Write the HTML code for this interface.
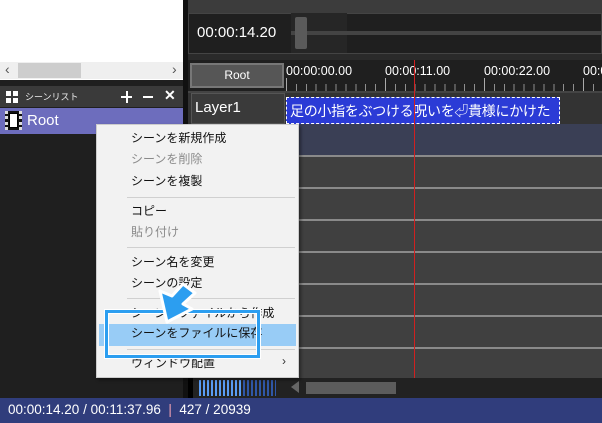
<!DOCTYPE html>
<html><head><meta charset="utf-8"><style>
*{margin:0;padding:0;box-sizing:border-box}
body{width:602px;height:423px;background:#1f1f1f;position:relative;overflow:hidden;font-family:"Liberation Sans","Noto Sans CJK JP",sans-serif}
.a{position:absolute}
.mi{position:absolute;left:131px;font-size:12px;color:#111;line-height:14px}
.dis{color:#8a8a8a}
.sep{position:absolute;left:127px;width:168px;height:1px;background:#d0d0d0}
.hl{position:absolute;left:286px;width:316px;height:2px;background:#8a8a8a}
.rl{position:absolute;top:64px;font-size:12.5px;color:#fff;white-space:nowrap}
</style></head><body>
<div class="a" style="left:0;top:0;width:183px;height:80px;background:#fff"></div>
<div class="a" style="left:0;top:62px;width:183px;height:17px;background:#efefef"></div>
<div class="a" style="left:18px;top:63px;width:63px;height:15px;background:#cdcdcd"></div>
<div class="a" style="left:5px;top:61px;font-size:14px;color:#555">&#8249;</div>
<div class="a" style="left:172px;top:61px;font-size:14px;color:#555">&#8250;</div>
<div class="a" style="left:183px;top:0;width:5px;height:423px;background:#111"></div>
<div class="a" style="left:0;top:86px;width:183px;height:21px;background:#3a3a3a"></div>
<div class="a" style="left:6px;top:91px;width:5px;height:5px;background:#fff"></div>
<div class="a" style="left:13px;top:91px;width:5px;height:5px;background:#fff"></div>
<div class="a" style="left:6px;top:98px;width:5px;height:5px;background:#fff"></div>
<div class="a" style="left:13px;top:98px;width:5px;height:5px;background:#fff"></div>
<div class="a" style="left:25px;top:90px;font-size:9px;color:#eee">シーンリスト</div>
<div class="a" style="left:121px;top:96px;width:11px;height:2px;background:#fff"></div>
<div class="a" style="left:125.5px;top:91px;width:2px;height:12px;background:#fff"></div>
<div class="a" style="left:143px;top:96px;width:10px;height:2px;background:#fff"></div>
<div class="a" style="left:164px;top:87px;font-size:14px;font-weight:bold;color:#fff">✕</div>
<div class="a" style="left:0;top:108px;width:183px;height:26px;background:#6d6dbd"></div>
<div class="a" style="left:5px;top:111px;width:17px;height:19px;background:#111;border-left:3px dotted #ddd;border-right:3px dotted #ddd"></div>
<div class="a" style="left:9px;top:113px;width:9px;height:15px;background:#fff;border:1px solid #000"></div>
<div class="a" style="left:27px;top:112px;font-size:15px;color:#fff">Root</div>
<div class="a" style="left:188px;top:0;width:414px;height:13px;background:#3c3c3c"></div>
<div class="a" style="left:188px;top:13px;width:414px;height:41px;background:#1f1f1f;border:1px solid #444"></div>
<div class="a" style="left:291px;top:13px;width:56px;height:40px;background:#262626"></div>
<div class="a" style="left:291px;top:31px;width:311px;height:4px;background:#444"></div>
<div class="a" style="left:295px;top:17px;width:12px;height:32px;background:#5a5a5a;border-radius:2px"></div>
<div class="a" style="left:197px;top:24px;font-size:15px;color:#fff">00:00:14.20</div>
<div class="a" style="left:188px;top:54px;width:414px;height:6px;background:#2a2a2a"></div>
<div class="a" style="left:188px;top:60px;width:414px;height:32px;background:#1f1f1f"></div>
<div class="a" style="left:190px;top:63px;width:94px;height:25px;background:#565656;border:2px solid #777;color:#fff;font-size:12px;text-align:center;line-height:21px">Root</div>
<div class="rl" style="left:286px">00:00:00.00</div>
<div class="rl" style="left:385px">00:00:11.00</div>
<div class="rl" style="left:484px">00:00:22.00</div>
<div class="rl" style="left:583px">00:0</div>
<div class="a" style="left:286px;top:84px;width:316px;height:8px;background:repeating-linear-gradient(90deg,#aaa 0 1px,transparent 1px 9.9px);opacity:.8"></div>
<div class="a" style="left:286px;top:78px;width:316px;height:14px;background:repeating-linear-gradient(90deg,#aaa 0 1px,transparent 1px 99px)"></div>
<div class="a" style="left:188px;top:91px;width:414px;height:2px;background:#444"></div>
<div class="a" style="left:188px;top:93px;width:414px;height:31px;background:#333"></div>
<div class="a" style="left:191px;top:93px;width:94px;height:31px;background:#3a3a3a;border:1px solid #555;color:#fff;font-size:15px;padding:5px 3px">Layer1</div>
<div class="a" style="left:286px;top:97px;width:274px;height:27px;background:#2b3bd6;border:1px dashed #fff;color:#fff;font-size:14px;letter-spacing:-0.3px;padding:3px 3px;white-space:nowrap;overflow:hidden">足の小指をぶつける呪いを⏎貴様にかけた</div>
<div class="a" style="left:286px;top:124px;width:316px;height:32px;background:#3a3f55"></div>
<div class="a" style="left:286px;top:156px;width:316px;height:222px;background:#404040"></div>
<div class="hl" style="top:155px"></div><div class="hl" style="top:187px"></div><div class="hl" style="top:219px"></div><div class="hl" style="top:251px"></div><div class="hl" style="top:283px"></div><div class="hl" style="top:315px"></div><div class="hl" style="top:347px"></div>
<div class="a" style="left:188px;top:124px;width:98px;height:254px;background:#2a2a2a"></div>
<div class="a" style="left:414px;top:60px;width:1px;height:318px;background:#d02020"></div>
<div class="a" style="left:188px;top:378px;width:414px;height:20px;background:#222"></div>
<div class="a" style="left:188px;top:378px;width:5px;height:20px;background:#000"></div>
<div class="a" style="left:199px;top:380px;width:44px;height:16px;background:repeating-linear-gradient(90deg,#5a9cf5 0 2px,transparent 2px 4px)"></div>
<div class="a" style="left:243px;top:380px;width:33px;height:16px;background:repeating-linear-gradient(90deg,#2f57a8 0 2px,transparent 2px 4px)"></div>
<div class="a" style="left:291px;top:381px;width:0;height:0;border-top:6px solid transparent;border-bottom:6px solid transparent;border-right:8px solid #666"></div>
<div class="a" style="left:306px;top:382px;width:90px;height:12px;background:#5c5c5c"></div>
<div class="a" style="left:0;top:398px;width:602px;height:25px;background:#303d7c;color:#fff;font-size:13.5px;padding:4px 8px;white-space:pre">00:00:14.20 / 00:11:37.96  <span style="color:#f0a0b0">|</span>  427 / 20939</div>
<div class="a" style="left:96px;top:124px;width:203px;height:254px;background:#f2f2f2;border:1px solid #ccc;box-shadow:2px 2px 3px rgba(0,0,0,.4)"></div>
<div class="mi" style="top:131px">シーンを新規作成</div>
<div class="mi dis" style="top:152px">シーンを削除</div>
<div class="mi" style="top:174px">シーンを複製</div>
<div class="sep" style="top:197px"></div>
<div class="mi" style="top:204px">コピー</div>
<div class="mi dis" style="top:225px">貼り付け</div>
<div class="sep" style="top:247px"></div>
<div class="mi" style="top:255px">シーン名を変更</div>
<div class="mi" style="top:276px">シーンの設定</div>
<div class="sep" style="top:298px"></div>
<div class="mi" style="top:306px">シーンをファイルから作成</div>
<div class="a" style="left:99px;top:324px;width:197px;height:22px;background:#98ccf6"></div>
<div class="mi" style="top:326px">シーンをファイルに保存</div>
<div class="sep" style="top:349px"></div>
<div class="mi" style="top:356px">ウィンドウ配置</div>
<div class="a" style="left:282px;top:354px;font-size:12px;color:#333">›</div>
<div class="a" style="left:105px;top:310px;width:155px;height:48px;border:3px solid #2c9ef0;box-shadow:0 0 0 1px #fff inset,0 0 0 1px #fff"></div>
<svg class="a" style="left:0;top:0" width="602" height="423">
<polygon points="183,284 195,293 183,304 192,309 167,322 160,291 172,296" fill="#2c9ef0" stroke="#fff" stroke-width="3" stroke-linejoin="round"/>
</svg>
</body></html>
